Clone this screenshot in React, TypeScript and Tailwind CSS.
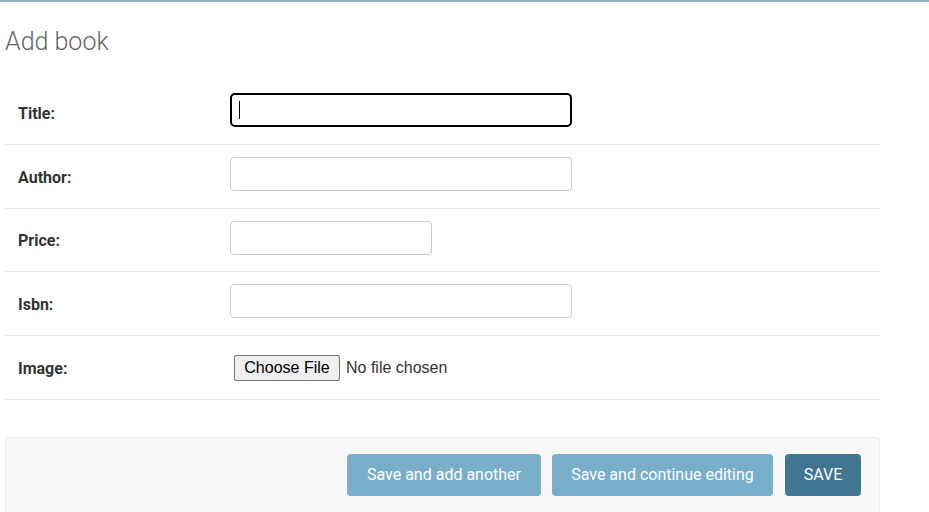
import React from "react";

const fields = [
  { label: "Title:", width: "w-[342px]", focused: true, h: "h-[64px]" },
  { label: "Author:", width: "w-[342px]", h: "h-[64px]" },
  { label: "Price:", width: "w-[202px]", h: "h-[63px]" },
  { label: "Isbn:", width: "w-[342px]", h: "h-[64px]" },
];

export default function App() {
  return (
    <div className="min-h-[512px] bg-white font-['Roboto',sans-serif] text-[#333]">
      <div className="h-[2px] bg-[#8fb3c0]" />
      <div className="ml-[5px] w-[875px]">
        <h1 className="pt-[25px] text-[25px] leading-[30px] font-light text-[#666]">Add book</h1>
        <div className="mt-[24px]">
          {fields.map((f) => (
            <div key={f.label} className={`flex ${f.h} items-start border-b border-[#e8e8e8]`}>
              <label className="mt-[2px] w-[225px] self-center pl-[13px] text-[16px] font-bold text-[#333]">
                {f.label}
              </label>
              <div className="relative mt-[12px]">
                <input
                  type="text"
                  className={
                    f.focused
                      ? `${f.width} h-[34px] rounded-[5px] border-2 border-black outline-none`
                      : `${f.width} h-[34px] rounded-[4px] border border-[#ccc] outline-none`
                  }
                />
                {f.focused ? (
                  <span className="absolute left-[9px] top-[8px] h-[18px] w-px bg-black" />
                ) : null}
              </div>
            </div>
          ))}
          <div className="flex h-[64px] items-center border-b border-[#e8e8e8]">
            <label className="mt-[2px] w-[225px] pl-[13px] text-[16px] font-bold text-[#333]">Image:</label>
            <div className="flex items-center pl-[4px] font-['Liberation_Sans',Arial,sans-serif] text-[16px]">
              <span className="flex h-[26px] w-[106px] items-center justify-center rounded-[2px] border border-[#767676] bg-[#efefef] text-black">
                Choose File
              </span>
              <span className="ml-[6px] text-[#333]">No file chosen</span>
            </div>
          </div>
        </div>
        <div className="mt-[37px] flex h-[90px] justify-end gap-[11px] rounded-[4px] border border-[#eee] bg-[#f8f8f8] pt-[16px] pr-[18px]">
          <button className="h-[42px] w-[194px] rounded-[4px] bg-[#79aec8] text-[16px] text-white">
            Save and add another
          </button>
          <button className="h-[42px] w-[221px] rounded-[4px] bg-[#79aec8] text-[16px] text-white">
            Save and continue editing
          </button>
          <button className="ml-px h-[42px] w-[76px] rounded-[4px] bg-[#417690] text-[16px] text-white">
            SAVE
          </button>
        </div>
      </div>
    </div>
  );
}
